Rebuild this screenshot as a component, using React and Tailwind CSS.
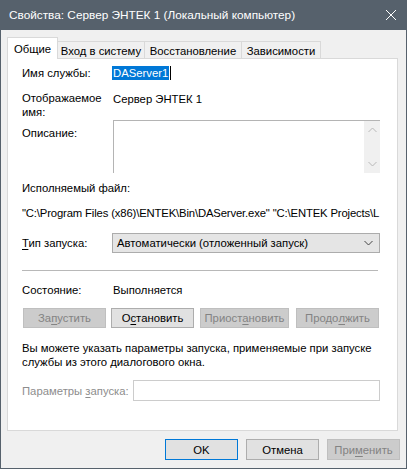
import React from 'react';

const Btn = ({ children, disabled, primary, className = '' }) => (
  <div
    className={
      'h-[20px] flex items-center justify-center border whitespace-nowrap ' +
      (disabled
        ? 'bg-[#cccccc] border-[#bfbfbf] text-[#838383] '
        : primary
        ? 'bg-[#e1e1e1] border-[#0078d7] text-black '
        : 'bg-[#e1e1e1] border-[#adadad] text-black ') +
      className
    }
  >
    {children}
  </div>
);

const U = ({ children }) => <span className="underline underline-offset-2">{children}</span>;

const Chevron = ({ up, color = '#444' }) => (
  <svg width="9" height="6" viewBox="0 0 9 6">
    <path d={up ? 'M0.5 5 L4.5 1 L8.5 5' : 'M0.5 1 L4.5 5 L8.5 1'} fill="none" stroke={color} strokeWidth="1" />
  </svg>
);

export default function App() {
  return (
    <div className="w-[407px] h-[469px] bg-[#f0f0f0] border-x border-b border-[#56616c] flex flex-col font-['Liberation_Sans',Arial,sans-serif] text-[11.3px] leading-[14px] text-black overflow-hidden">
      {/* title bar */}
      <div className="h-[30px] shrink-0 bg-[#56616c] text-white flex items-center pl-[8px] pr-[4px]">
        <span className="flex-1 text-[11.8px] whitespace-nowrap">Свойства: Сервер ЭНТЕК 1 (Локальный компьютер)</span>
        <svg width="12" height="12" viewBox="0 0 12 12" className="mr-[5px]">
          <path d="M1 1 L11 11 M11 1 L1 11" stroke="#ffffff" strokeWidth="1" />
        </svg>
      </div>

      {/* tabs */}
      <div className="flex items-end ml-[6px] mt-[7px] h-[22px] relative z-10 -mb-px whitespace-nowrap">
        <div className="h-[22px] w-[51px] bg-white border-l border-t border-r border-[#d9d9d9] flex items-start justify-center pt-[4px]">
          Общие
        </div>
        <div className="h-[18px] w-[87px] border-t border-r border-[#d9d9d9] flex items-center justify-center">
          Вход в систему
        </div>
        <div className="h-[18px] w-[97px] border-t border-r border-[#d9d9d9] flex items-center justify-center">
          Восстановление
        </div>
        <div className="h-[18px] w-[79px] border-t border-r border-[#d9d9d9] flex items-center justify-center">
          Зависимости
        </div>
      </div>

      {/* panel */}
      <div className="ml-[6px] w-[391px] h-[373px] bg-white border border-[#d9d9d9] pl-[14px] pr-[17px] flex flex-col">
        <div className="mt-[6px] h-[16px] flex items-center">
          <span className="w-[90px]">Имя службы:</span>
          <span className="bg-[#0078d7] text-white px-[1px] leading-[14px]">DAServer1</span>
          <span className="w-px h-[14px] bg-black ml-[1px]" />
        </div>

        <div className="mt-[10px] flex">
          <span className="w-[90px]">Отображаемое<br />имя:</span>
          <span className="mt-[1px] ml-[1px]">Сервер ЭНТЕК 1</span>
        </div>

        <div className="mt-[1px] flex">
          <span className="w-[91px] pt-[6px]">Описание:</span>
          <div className="flex-1 h-[53px] border-t border-l border-[#b4b4b4] flex justify-end">
            <div className="w-[16px] h-full bg-[#f0f0f0] flex flex-col items-center justify-between py-[6px]">
              <Chevron up color="#b8b8b8" />
              <Chevron color="#b8b8b8" />
            </div>
          </div>
        </div>

        <div className="mt-[8px]">Исполняемый файл:</div>

        <div className="mt-[11px] whitespace-nowrap overflow-hidden tracking-[-0.15px]">
          {'"C:\\Program Files (x86)\\ENTEK\\Bin\\DAServer.exe" "C:\\ENTEK Projects\\L'}
        </div>

        <div className="mt-[13px] flex items-center">
          <span className="w-[90px]"><U>Т</U>ип запуска:</span>
          <div className="flex-1 h-[20px] bg-[#e5e5e5] border border-[#acacac] flex items-center pl-[4px] pr-[6px]">
            <span className="flex-1">Автоматически (отложенный запуск)</span>
            <Chevron />
          </div>
        </div>

        <div className="mt-[17px] h-px bg-[#b8b8b8] mr-[2px]" />

        <div className="mt-[12px] flex">
          <span className="w-[91px]">Состояние:</span>
          <span>Выполняется</span>
        </div>

        <div className="mt-[11px] flex ml-[1px]">
          <Btn disabled className="w-[83px]">За<U>п</U>устить</Btn>
          <Btn className="w-[83px] ml-[5px]">О<U>с</U>тановить</Btn>
          <Btn disabled className="w-[89px] ml-[6px]">Приост<U>а</U>новить</Btn>
          <Btn disabled className="w-[83px] ml-[7px]">Продо<U>л</U>жить</Btn>
        </div>

        <div className="mt-[13px] whitespace-nowrap">
          Вы можете указать параметры запуска, применяемые при запуске
          <br />
          службы из этого диалогового окна.
        </div>

        <div className="mt-[11px] flex items-center">
          <span className="w-[111px] text-[#8d8d8d] whitespace-nowrap">Параметры <U>з</U>апуска:</span>
          <div className="flex-1 h-[21px] bg-white border border-[#cccccc]" />
        </div>
      </div>

      {/* bottom buttons */}
      <div className="mt-[8px] flex justify-end gap-[8px] pr-[6px]">
        <Btn primary className="w-[73px] h-[21px]">OK</Btn>
        <Btn className="w-[73px] h-[21px]">Отмена</Btn>
        <Btn disabled className="w-[73px] h-[21px]">При<U>м</U>енить</Btn>
      </div>
    </div>
  );
}
